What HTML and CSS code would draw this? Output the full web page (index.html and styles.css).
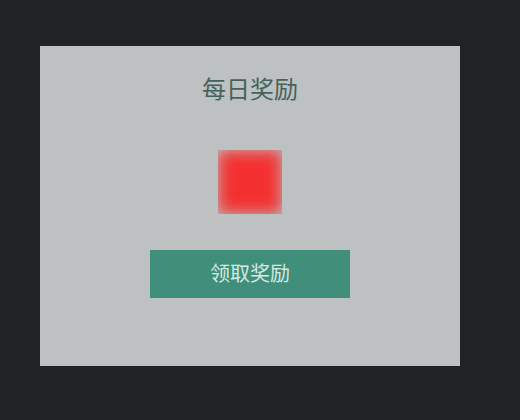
FILE: index.html
```html
<!DOCTYPE html>
<html lang="zh-CN">

<head>
    <meta charset="UTF-8">
    <title>每日奖励</title>
    <link rel="stylesheet" href="styles.css">
</head>

<body>
    <div class="reward-panel">
        <h1 class="reward-title">每日奖励</h1>
        <div class="reward-icon">
            <div class="reward-icon-fill"></div>
        </div>
        <button class="claim-btn">领取奖励</button>
    </div>
</body>

</html>
```

FILE: styles.css
```css
* {
    margin: 0;
    padding: 0;
    box-sizing: border-box;
    font-family: "Liberation Sans", "Noto Sans CJK SC", sans-serif;
}

body {
    background-color: #212226;
    height: 420px;
    overflow: hidden;
    padding: 46px 60px 54px 40px;
}

.reward-panel {
    width: 420px;
    height: 320px;
    background-color: #bdc1c2;
    display: flex;
    flex-direction: column;
    align-items: center;
    padding-top: 26px;
}

.reward-title {
    color: #46625c;
    font-size: 24px;
    font-weight: 400;
    line-height: 36px;
}

.reward-icon {
    width: 64px;
    height: 64px;
    margin-top: 42px;
    overflow: hidden;
}

.reward-icon-fill {
    width: 100%;
    height: 100%;
    background-color: #f42f2f;
    filter: blur(8px);
}

.claim-btn {
    width: 200px;
    height: 48px;
    margin-top: 36px;
    padding-bottom: 3px;
    border: none;
    background-color: #3f8f7b;
    color: #d6e8e2;
    font-size: 20px;
    cursor: pointer;
}
```
